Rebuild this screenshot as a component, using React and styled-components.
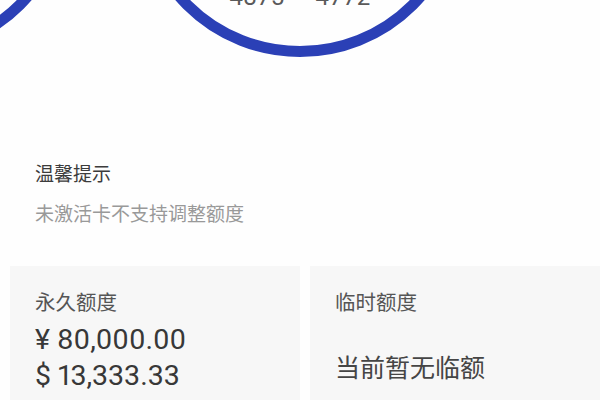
import React from 'react'
import styled, { createGlobalStyle } from 'styled-components'

const colors = {
    blue: '#2b40b6',
    page: '#fefefe',
    card: '#f7f7f7',
    title: '#3c3c3c',
    muted: '#999999',
    label: '#555555',
    value: '#383838',
}

const GlobalStyle = createGlobalStyle`
    html, body {
        margin: 0;
        padding: 0;
        background: ${colors.page};
        font-family: 'Noto Sans CJK SC', 'Noto Sans', sans-serif;
    }
    #root {
        width: 600px;
        height: 400px;
        overflow: hidden;
    }
`

const Page = styled.div`
    display: flex;
    flex-direction: column;
    width: 600px;
`

const Hero = styled.div`
    position: relative;
    height: 140px;
    overflow: hidden;
    display: flex;
    justify-content: center;
`

const Rings = styled.svg`
    position: absolute;
    left: 0;
    top: 0;
`

const RangeText = styled.div`
    position: relative;
    margin-top: -15px;
    font-family: Roboto, 'Noto Sans', sans-serif;
    font-size: 24px;
    line-height: 24px;
    color: #5a5a5a;
    letter-spacing: 0.2px;
`

const Tip = styled.div`
    display: flex;
    flex-direction: column;
    gap: 20px;
    padding: 23px 35px 0;
`

const TipTitle = styled.div`
    font-size: 19px;
    line-height: 20px;
    color: ${colors.title};
`

const TipText = styled.div`
    font-size: 19px;
    line-height: 20px;
    color: ${colors.muted};
`

const Cards = styled.div`
    display: grid;
    grid-template-columns: 1fr 1fr;
    gap: 10px;
    padding-left: 10px;
    margin-top: 43px;
`

const Card = styled.div`
    background: ${colors.card};
    height: 150px;
    padding: 25px 25px 0;
    box-sizing: border-box;
    display: flex;
    flex-direction: column;
`

const CardLabel = styled.div`
    font-size: 20.5px;
    line-height: 20px;
    color: ${colors.label};
`

const Amount = styled.div`
    font-family: Roboto, 'Noto Sans', sans-serif;
    font-size: 28.5px;
    line-height: 36px;
    color: ${colors.value};
    font-variant-numeric: proportional-nums;
    margin-top: ${(props) => props.$top || 0}px;
`

const Empty = styled.div`
    font-size: 25px;
    line-height: 26px;
    color: #454545;
    margin-top: 42px;
`

function App() {
    return (
        <Page>
            <GlobalStyle />
            <Hero>
                <Rings width='600' height='140' viewBox='0 0 600 140'>
                    <circle cx='-93' cy='-108' r='159.5' fill='none' stroke={colors.blue} strokeWidth='11' />
                    <circle cx='300' cy='-108' r='159.5' fill='none' stroke={colors.blue} strokeWidth='11' />
                </Rings>
                <RangeText>4875 — 4772</RangeText>
            </Hero>
            <Tip>
                <TipTitle>温馨提示</TipTitle>
                <TipText>未激活卡不支持调整额度</TipText>
            </Tip>
            <Cards>
                <Card>
                    <CardLabel>永久额度</CardLabel>
                    <Amount $top={11}>¥ 80,000.00</Amount>
                    <Amount>$ 13,333.33</Amount>
                </Card>
                <Card>
                    <CardLabel>临时额度</CardLabel>
                    <Empty>当前暂无临额</Empty>
                </Card>
            </Cards>
        </Page>
    )
}

export default App
